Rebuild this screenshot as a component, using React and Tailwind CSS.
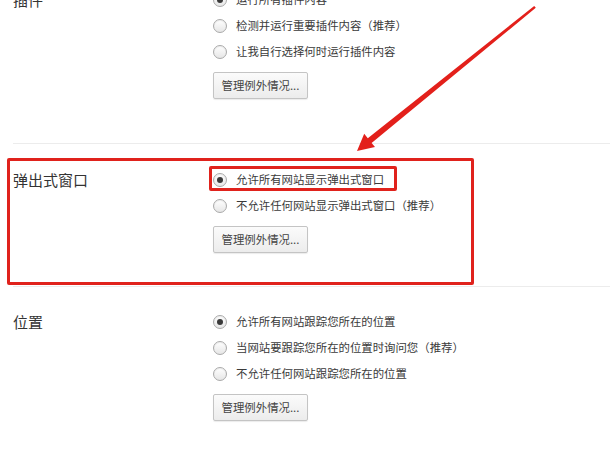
import React from 'react';

const font = { fontFamily: '"Noto Sans CJK SC", "Noto Sans", sans-serif' };

const sections = [
  {
    title: '插件',
    options: ['运行所有插件内容', '检测并运行重要插件内容（推荐）', '让我自行选择何时运行插件内容'],
    checked: 0,
  },
  {
    title: '弹出式窗口',
    options: ['允许所有网站显示弹出式窗口', '不允许任何网站显示弹出式窗口（推荐）'],
    checked: 0,
    highlight: true,
  },
  {
    title: '位置',
    options: ['允许所有网站跟踪您所在的位置', '当网站要跟踪您所在的位置时询问您（推荐）', '不允许任何网站跟踪您所在的位置'],
    checked: 0,
  },
];

const Radio = ({ checked }) => (
  <span className="w-[14px] h-[14px] shrink-0 rounded-full border border-[#a9a9a9] bg-gradient-to-b from-[#ffffff] to-[#e6e6e6] flex items-center justify-center shadow-[inset_0_1px_1px_rgba(0,0,0,0.08)]">
    {checked && <span className="w-[6px] h-[6px] rounded-full bg-[#3a3a3a]" />}
  </span>
);

const Section = ({ section, boxed }) => (
  <div className="flex">
    <div className={boxed ? 'w-[203px] pl-[3px]' : 'w-[213px] pl-[13px]'}>
      <div className="h-[26px] flex items-center text-[15px] text-[#333]">{section.title}</div>
    </div>
    <div className="flex flex-col">
      {section.options.map((opt, i) => (
        <div key={opt} className="relative h-[26px] flex items-center gap-[9px]">
          {section.highlight && i === 0 && (
            <span className="absolute -left-[4px] -top-[1px] w-[188px] h-[25px] border-[3px] border-[#e0221c] rounded-[2px]" />
          )}
          <Radio checked={i === section.checked} />
          <span className="text-[11.4px] text-[#3a3a3a] whitespace-nowrap">{opt}</span>
        </div>
      ))}
      <button className="mt-[7px] w-[95px] h-[27px] border border-[#c4c4c4] rounded-[2px] bg-gradient-to-b from-[#fbfbfb] to-[#ececec] shadow-[0_1px_1px_rgba(0,0,0,0.08)] text-[11.4px] text-[#444] flex items-center justify-center">
        管理例外情况...
      </button>
    </div>
  </div>
);

const Divider = ({ className = '' }) => <div className={`ml-[13px] border-t border-[#ececec] ${className}`} />;

export default function App() {
  return (
    <div className="relative w-[610px] h-[457px] overflow-hidden bg-white" style={font}>
      <div className="-mt-[13px] pb-[44px]">
        <Section section={sections[0]} />
      </div>
      <Divider />
      <div className="mt-[14px] ml-[7px] w-[467px] border-[3px] border-[#e0221c] rounded-[2px] pt-[6px] pb-[29px]">
        <Section section={sections[1]} boxed />
      </div>
      <Divider className="mt-[1px]" />
      <div className="pt-[22px]">
        <Section section={sections[2]} />
      </div>

      {/* red arrow annotation */}
      <svg className="absolute inset-0 pointer-events-none" width="610" height="457" viewBox="0 0 610 457">
        <polygon
          points="357,151 375,147 371.6,142.9 535.8,7.8 534.2,6 367.8,138.3 364.2,133.8"
          fill="#e3201b"
        />
      </svg>
    </div>
  );
}
